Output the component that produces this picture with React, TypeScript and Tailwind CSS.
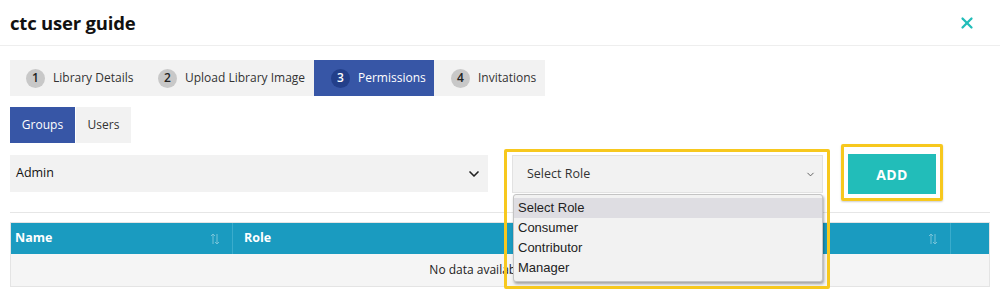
import { X, ChevronDown } from "lucide-react";

const steps = [
  { n: 1, label: "Library Details", w: "w-[136px] pl-[16px]" },
  { n: 2, label: "Upload Library Image", w: "w-[168px] pl-[12px]" },
  { n: 3, label: "Permissions", w: "w-[120px] pl-[17px]" },
  { n: 4, label: "Invitations", w: "w-[111px] pl-[17px]" },
];

const roles = ["Select Role", "Consumer", "Contributor", "Manager"];

function SortIcon() {
  return (
    <svg width="10" height="12" viewBox="0 0 10 12" className="opacity-40">
      <path d="M3 11V1M1 3l2-2 2 2" stroke="white" strokeWidth="1" fill="none" />
      <path d="M7 1v10M5 9l2 2 2-2" stroke="white" strokeWidth="1" fill="none" />
    </svg>
  );
}

export default function App() {
  return (
    <div className="w-[1000px] h-[295px] bg-white text-[#222] font-['Open_Sans',sans-serif] overflow-hidden">
      {/* header */}
      <div className="h-[46px] flex items-center justify-between px-[10px] border-b border-[#eeeeee]">
        <h1 className="text-[18.5px] font-bold text-[#111] tracking-[-0.2px]">ctc user guide</h1>
        <X className="text-[#22bdb9] mr-[14px]" size={18} strokeWidth={3} />
      </div>

      <div className="px-[10px]">
        {/* steps */}
        <div className="mt-[14px] flex h-[36px] w-[535px] bg-[#f2f2f2] text-[12px] whitespace-nowrap">
          {steps.map((s) => {
            const active = s.n === 3;
            return (
              <div
                key={s.n}
                className={
                  active
                    ? `flex shrink-0 items-center gap-[8px] bg-[#3756a6] text-white ${s.w}`
                    : `flex shrink-0 items-center gap-[8px] text-[#333] ${s.w}`
                }
              >
                <span
                  className={
                    active
                      ? "w-[19px] h-[19px] rounded-full bg-[#233f8a] text-white flex items-center justify-center text-[12px] font-semibold"
                      : "w-[19px] h-[19px] rounded-full bg-[#c8c8c8] text-[#222] flex items-center justify-center text-[12px] font-semibold"
                  }
                >
                  {s.n}
                </span>
                {s.label}
              </div>
            );
          })}
        </div>

        {/* groups / users */}
        <div className="mt-[11px] flex h-[36px] text-[12px]">
          <div className="w-[65px] flex items-center justify-center bg-[#3756a6] text-white">Groups</div>
          <div className="w-[55px] ml-[1px] flex items-center justify-center bg-[#f2f2f2] text-[#333]">Users</div>
        </div>

        {/* selects row */}
        <div className="mt-[12px] flex items-start">
          <div className="w-[478px] h-[37px] bg-[#f2f2f2] flex items-center justify-between px-[6px] text-[12.5px] text-[#111]">
            <span>Admin</span>
            <ChevronDown size={16} strokeWidth={2.5} className="text-[#222]" />
          </div>

          <div className="relative ml-[24px] w-[311px] h-[38px]">
            <div className="h-full bg-[#f2f2f2] border border-[#e2e2e2] flex items-center justify-between pl-[14px] pr-[6px] text-[12.5px] font-medium text-[#333]">
              <span>Select Role</span>
              <ChevronDown size={11} strokeWidth={2} className="text-[#555]" />
            </div>
            {/* open dropdown list */}
            <div className="absolute z-10 left-[1px] top-[39px] w-[310px] bg-[#f2f2f2] border border-[#c4c4c4] rounded-[3px] shadow-[1px_2px_3px_rgba(0,0,0,0.35)] py-[3px] font-['Liberation_Sans',sans-serif] text-[13px] text-[#222]">
              {roles.map((r, i) => (
                <div key={r} className={i === 0 ? "h-[20px] px-[4px] flex items-center bg-[#dedde2]" : "h-[20px] px-[4px] flex items-center"}>
                  {r}
                </div>
              ))}
            </div>
            {/* highlight outline */}
            <div className="absolute z-20 left-[-8px] top-[-6px] w-[326px] h-[140px] border-[3px] border-[#f7c81e] rounded-[2px] pointer-events-none" />
          </div>

          <div className="relative ml-[25px] mt-[-1px]">
            <button className="w-[88px] h-[40px] bg-[#22bdb9] text-white font-bold text-[14px] tracking-[0.3px]">ADD</button>
            <div className="absolute left-[-7px] top-[-10px] w-[102px] h-[57px] border-[3px] border-[#f7c81e] rounded-[2px] pointer-events-none shadow-[0_1px_2px_rgba(0,0,0,0.2)]" />
          </div>
        </div>

        {/* divider */}
        <div className="mt-[18px] h-px w-[980px] bg-[#e6e6e6]" />

        {/* table */}
        <div className="mt-[9px] w-[980px] border border-[#e4e4e4]">
          <div className="flex h-[31px] bg-[#1a9bc0] text-white text-[12.5px] font-bold">
            <div className="w-[222px] flex items-center justify-between px-[4px] pr-[12px] border-r border-[#3aaccc]">
              <span>Name</span>
              <SortIcon />
            </div>
            <div className="flex-1 flex items-center justify-between px-[11px] pr-[12px] border-r border-[#3aaccc]">
              <span>Role</span>
              <SortIcon />
            </div>
            <div className="w-[38px]" />
          </div>
          <div className="h-[32px] bg-[#f5f5f5] flex items-center justify-center text-[12px] text-[#222]">
            No data available in table
          </div>
        </div>
      </div>
    </div>
  );
}
